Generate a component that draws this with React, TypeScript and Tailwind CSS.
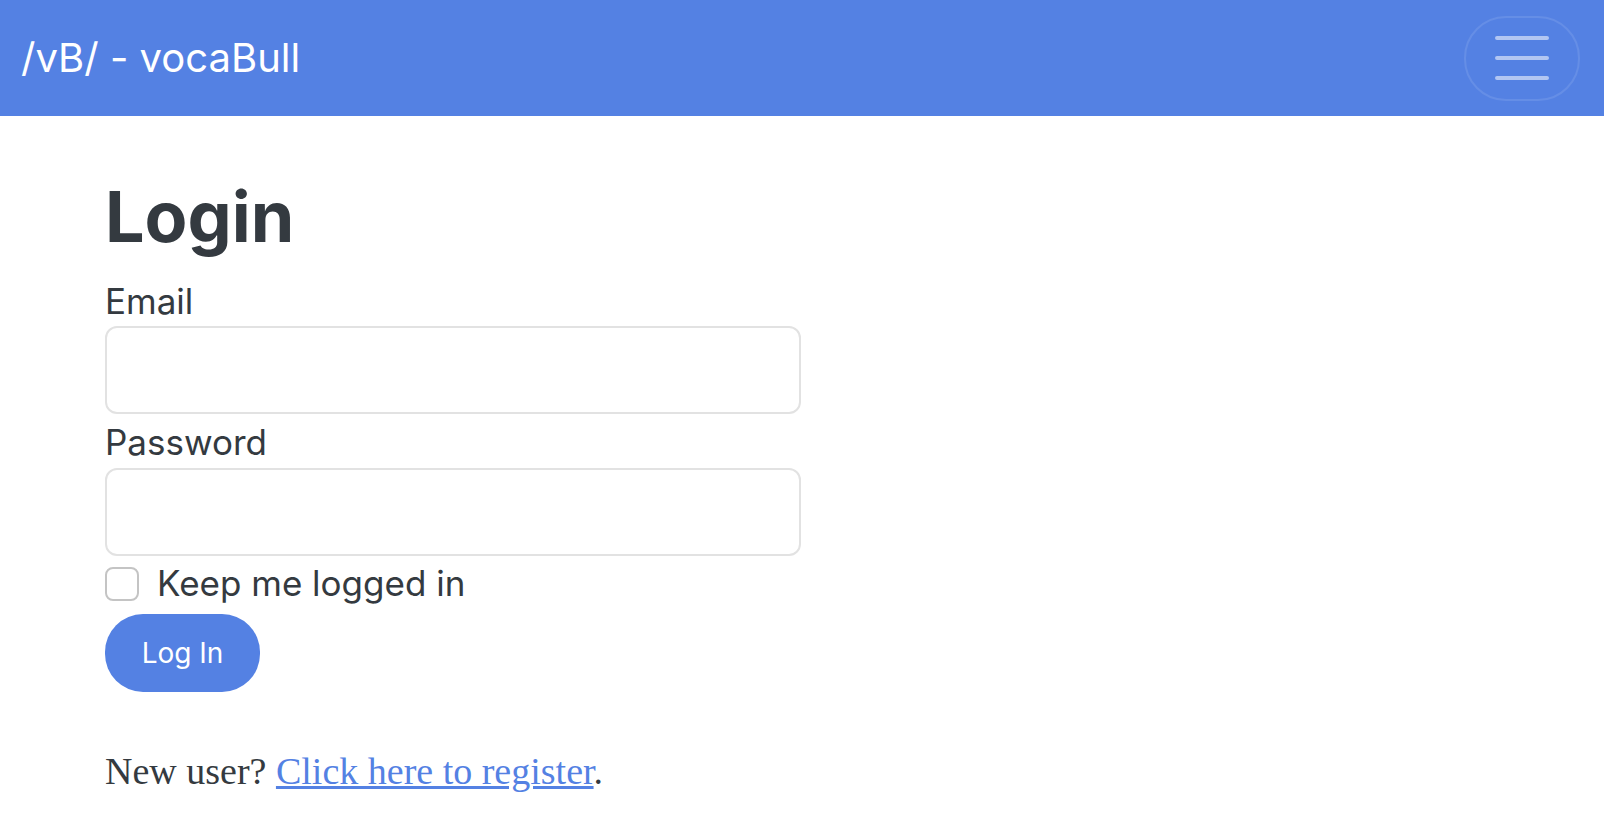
import { useState } from 'react';

export default function App() {
  const [email, setEmail] = useState('');
  const [password, setPassword] = useState('');
  const [keep, setKeep] = useState(false);

  return (
    <div className="min-h-screen bg-white font-['Inter',sans-serif] text-[#343a40]">
      {/* top bar */}
      <nav className="flex h-[116px] items-center justify-between bg-[#5481e3] pl-[21px] pr-[24px]">
        <span className="text-[40px] font-normal text-white">/vB/ - vocaBull</span>
        <button className="flex h-[85px] w-[116px] items-center justify-center rounded-[42px] border-2 border-white/10">
          <svg width="54" height="44" viewBox="0 0 54 44">
            <path d="M2 2h50M2 22h50M2 42h50" stroke="rgba(255,255,255,0.55)" strokeWidth="4" strokeLinecap="round" />
          </svg>
        </button>
      </nav>

      <main className="pl-[105px]">
        <h1 className="mt-[66px] text-[70px] font-bold leading-none">Login</h1>

        <form className="mt-[32px] w-[696px]" onSubmit={e => e.preventDefault()}>
          <label className="block text-[35px] leading-none">Email</label>
          <input
            type="email"
            value={email}
            onChange={e => setEmail(e.target.value)}
            className="mt-[7px] block h-[88px] w-full rounded-[12px] border-2 border-[#e2e2e2] px-5 text-[30px] outline-none"
          />

          <label className="mt-[11px] block text-[35px] leading-none">Password</label>
          <input
            type="password"
            value={password}
            onChange={e => setPassword(e.target.value)}
            className="mt-[8px] block h-[88px] w-full rounded-[12px] border-2 border-[#e2e2e2] px-5 text-[30px] outline-none"
          />

          <label className="mt-[10px] flex items-center gap-[18px]">
            <input
              type="checkbox"
              checked={keep}
              onChange={e => setKeep(e.target.checked)}
              className="h-[34px] w-[34px] appearance-none rounded-[8px] border-2 border-[#c4c4c4] bg-white"
            />
            <span className="text-[35px] leading-none">Keep me logged in</span>
          </label>

          <button
            type="submit"
            className="mt-[13px] flex h-[78px] w-[155px] items-center justify-center rounded-[38px] bg-[#5481e3] text-[28px] text-white"
          >
            Log In
          </button>
        </form>

        <p className="mt-[60px] font-['Liberation_Serif',serif] text-[38px] leading-none">
          New user?{' '}
          <a href="#" className="text-[#5481e3] underline">
            Click here to register
          </a>
          .
        </p>
      </main>
    </div>
  );
}
